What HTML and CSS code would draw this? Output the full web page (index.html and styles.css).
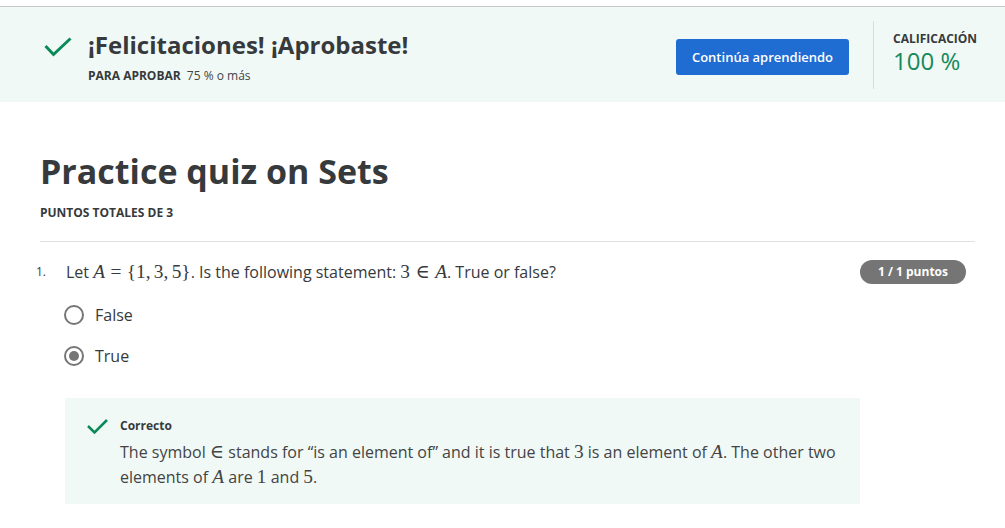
FILE: index.html
```html
<!DOCTYPE html>
<html lang="es">
<head>
<meta charset="utf-8">
<title>Practice quiz on Sets</title>
<link rel="stylesheet" href="styles.css">
</head>
<body>
<div class="topbar"></div>
<section class="banner">
  <div class="banner-left">
    <svg class="banner-check" width="28" height="20" viewBox="0 0 28 20"><path d="M1.5 9 L9.5 17.5 L26.5 1.5" fill="none" stroke="#0b8a59" stroke-width="3"/></svg>
    <div class="banner-text">
      <h2 class="banner-title">¡Felicitaciones! ¡Aprobaste!</h2>
      <div class="banner-sub"><span class="caps">PARA APROBAR</span> 75 % o más</div>
    </div>
  </div>
  <div class="banner-right">
    <button class="btn-primary">Continúa aprendiendo</button>
    <div class="divider"></div>
    <div class="grade">
      <div class="grade-label">CALIFICACIÓN</div>
      <div class="grade-value">100 %</div>
    </div>
  </div>
</section>

<main class="main">
  <h1 class="quiz-title">Practice quiz on Sets</h1>
  <div class="total">PUNTOS TOTALES DE 3</div>
  <hr class="rule">

  <div class="question">
    <div class="q-row">
      <span class="q-num">1.</span>
      <p class="q-text">Let <span class="m"><i>A</i><span class="rel">=</span>{1,<span class="thin"></span>3,<span class="thin"></span>5}</span>. Is the following statement: <span class="m">3<span class="rel">∈</span><i>A</i></span>. True or false?</p>
      <span class="pill">1 / 1 puntos</span>
    </div>
    <div class="options">
      <div class="option"><span class="radio"></span><span>False</span></div>
      <div class="option"><span class="radio checked"></span><span>True</span></div>
    </div>
    <div class="feedback">
      <svg class="fb-check" width="21" height="15" viewBox="0 0 21 15"><path d="M1 7 L7.5 13.5 L20 1" fill="none" stroke="#0b8a59" stroke-width="2.5"/></svg>
      <div class="fb-body">
        <div class="fb-title">Correcto</div>
        <p class="fb-text">The symbol <span class="m">∈</span> stands for “is an element of” and it is true that <span class="m">3</span> is an element of <span class="m"><i>A</i></span>. The other two elements of <span class="m"><i>A</i></span> are <span class="m">1</span> and <span class="m">5</span>.</p>
      </div>
    </div>
  </div>
</main>
</body>
</html>
```

FILE: styles.css
```css
* { box-sizing: border-box; }
html, body { margin: 0; padding: 0; background: #fff; }
body {
  font-family: "Open Sans", "Noto Sans", sans-serif;
  color: #373a3c;
  padding-top: 6px;
}
.topbar { height: 1px; background: #c9c9c9; }

.banner {
  background: #f0f9f6;
  height: 95px;
  display: flex;
  justify-content: space-between;
  align-items: stretch;
  padding-left: 44px;
}
.banner-left { display: flex; align-items: flex-start; padding-top: 22px; }
.banner-check { margin-top: 8px; margin-right: 16px; flex: none; }
.banner-title {
  margin: 0;
  font-size: 24px;
  line-height: 32px;
  font-weight: 700;
  color: #373a3c;
}
.banner-sub {
  margin-top: 7px;
  font-size: 12px;
  line-height: 16px;
  color: #444;
}
.caps { font-weight: 700; margin-right: 3px; color: #373a3c; }

.banner-right { display: flex; align-items: center; padding-top: 4px; }
.btn-primary {
  font-family: inherit;
  background: #1f6cd2;
  color: #fff;
  border: 0;
  border-radius: 3px;
  width: 173px;
  height: 36px;
  font-size: 13px;
  font-weight: 600;
  padding: 0;
}
.divider { width: 1px; height: 68px; background: #dcdcdc; margin-left: 24px; margin-top: -4px; }
.grade { width: 131px; padding-left: 19px; align-self: flex-start; padding-top: 20px; }
.grade-label { font-size: 12px; line-height: 16px; font-weight: 700; color: #373a3c; }
.grade-value { font-size: 24px; line-height: 28px; color: #17885a; margin-top: 0; }

.main { padding: 45px 30px 0 40px; }
.quiz-title {
  margin: 0;
  font-size: 34px;
  line-height: 48px;
  font-weight: 700;
  color: #373a3c;
}
.total {
  margin-top: 10px;
  font-size: 12px;
  line-height: 16px;
  font-weight: 700;
  color: #373a3c;
}
.rule { border: 0; border-top: 1px solid #e1e1e1; margin: 20px 0 0; }

.question { margin-top: 18px; }
.q-row { display: flex; align-items: center; margin-left: -4px; padding-right: 9px; }
.q-num { width: 30px; flex: none; font-size: 12px; line-height: 24px; }
.q-text { margin: 0; font-size: 16px; line-height: 24px; flex: 1; }
.m { font-family: "Liberation Serif", "DejaVu Serif", serif; font-size: 1.21em; line-height: 1; }
.m i { font-style: italic; }
.rel { margin: 0 0.28em; }
.thin { display: inline-block; width: 0.17em; }
.pill {
  background: #757575;
  color: #fff;
  font-size: 12px;
  font-weight: 700;
  height: 24px;
  line-height: 24px;
  width: 106px;
  text-align: center;
  border-radius: 12px;
}

.options { padding-left: 24px; margin-top: 19px; display: flex; flex-direction: column; gap: 17px; }
.option { display: flex; align-items: center; gap: 11px; font-size: 16px; line-height: 24px; }
.radio {
  width: 20px; height: 20px;
  border: 2px solid #767676;
  border-radius: 50%;
  display: flex; align-items: center; justify-content: center;
  flex: none;
}
.radio.checked::after {
  content: "";
  width: 10px; height: 10px;
  border-radius: 50%;
  background: #767676;
}

.feedback {
  margin: 30px 0 0 25px;
  width: 795px;
  background: #f0f9f6;
  display: flex;
  align-items: flex-start;
  padding: 19px 16px 14px 22px;
}
.fb-check { margin-top: 2px; margin-right: 12px; flex: none; }
.fb-title { font-size: 12px; line-height: 18px; font-weight: 700; color: #373a3c; }
.fb-text { margin: 5px 0 0; font-size: 16px; line-height: 25px; color: #444; }
```
